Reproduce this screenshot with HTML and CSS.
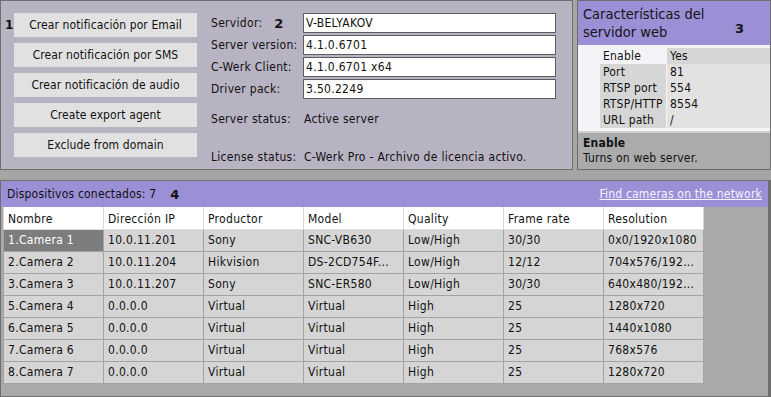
FILE: index.html
```html
<!DOCTYPE html>
<html>
<head>
<meta charset="utf-8">
<link rel="stylesheet" href="styles.css">
</head>
<body>
<div class="page">
  <div class="top">
    <div class="panel main">
      <div class="num num1">1</div>
      <div class="buttons">
        <div class="btn">Crear notificación por Email</div>
        <div class="btn">Crear notificación por SMS</div>
        <div class="btn">Crear notificación de audio</div>
        <div class="btn">Create export agent</div>
        <div class="btn">Exclude from domain</div>
      </div>
      <div class="form">
        <div class="frow"><span class="lbl">Servidor:<b class="num2">2</b></span><div class="inp">V-BELYAKOV</div></div>
        <div class="frow"><span class="lbl">Server version:</span><div class="inp">4.1.0.6701</div></div>
        <div class="frow"><span class="lbl">C-Werk Client:</span><div class="inp">4.1.0.6701 x64</div></div>
        <div class="frow"><span class="lbl">Driver pack:</span><div class="inp">3.50.2249</div></div>
        <div class="srow status1"><span class="lbl">Server status:</span><span>Active server</span></div>
        <div class="srow status2"><span class="lbl">License status:</span><span>C-Werk Pro - Archivo de licencia activo.</span></div>
      </div>
    </div>
    <div class="panel web">
      <div class="webhead"><span>Características del servidor web</span><b class="num3">3</b></div>
      <div class="props">
        <div class="prow first"><span class="pn">Enable</span><span class="pv">Yes</span></div>
        <div class="prow"><span class="pn">Port</span><span class="pv">81</span></div>
        <div class="prow"><span class="pn">RTSP port</span><span class="pv">554</span></div>
        <div class="prow"><span class="pn">RTSP/HTTP</span><span class="pv">8554</span></div>
        <div class="prow"><span class="pn">URL path</span><span class="pv">/</span></div>
      </div>
      <div class="desc"><b>Enable</b><span>Turns on web server.</span></div>
    </div>
  </div>
  <div class="panel devices">
    <div class="devhead"><span>Dispositivos conectados: 7</span><b class="num4">4</b><a class="find" href="#">Find cameras on the network</a></div>
    <table class="grid">
      <thead>
        <tr><th>Nombre</th><th>Dirección IP</th><th>Productor</th><th>Model</th><th>Quality</th><th>Frame rate</th><th>Resolution</th></tr>
      </thead>
      <tbody>
        <tr><td class="sel">1.Camera 1</td><td>10.0.11.201</td><td>Sony</td><td>SNC-VB630</td><td>Low/High</td><td>30/30</td><td>0x0/1920x1080</td></tr>
        <tr><td>2.Camera 2</td><td>10.0.11.204</td><td>Hikvision</td><td>DS-2CD754F...</td><td>Low/High</td><td>12/12</td><td>704x576/192...</td></tr>
        <tr><td>3.Camera 3</td><td>10.0.11.207</td><td>Sony</td><td>SNC-ER580</td><td>Low/High</td><td>30/30</td><td>640x480/192...</td></tr>
        <tr><td>5.Camera 4</td><td>0.0.0.0</td><td>Virtual</td><td>Virtual</td><td>High</td><td>25</td><td>1280x720</td></tr>
        <tr><td>6.Camera 5</td><td>0.0.0.0</td><td>Virtual</td><td>Virtual</td><td>High</td><td>25</td><td>1440x1080</td></tr>
        <tr><td>7.Camera 6</td><td>0.0.0.0</td><td>Virtual</td><td>Virtual</td><td>High</td><td>25</td><td>768x576</td></tr>
        <tr><td>8.Camera 7</td><td>0.0.0.0</td><td>Virtual</td><td>Virtual</td><td>High</td><td>25</td><td>1280x720</td></tr>
      </tbody>
    </table>
  </div>
</div>
</body>
</html>
```
FILE: styles.css
```css
* { box-sizing: border-box; }
html, body { margin: 0; padding: 0; }
body {
  background: #a5a5a5;
  font-family: "DejaVu Sans Condensed", "DejaVu Sans", sans-serif;
  font-size: 11px;
  color: #111;
  width: 771px;
  height: 397px;
  overflow: hidden;
}
.page { display: flex; flex-direction: column; gap: 10px; }
.top { display: flex; gap: 4px; height: 170px; }
.panel { border: 1px solid #6e6e6e; }
.main {
  width: 573px;
  background: #b8b3c3;
  display: flex;
  padding: 12px 0 0 4px;
}
.num { font-family: "DejaVu Sans", sans-serif; font-weight: bold; font-size: 12px; }
.num1 { width: 9px; margin-top: 5px; }
.buttons { display: flex; flex-direction: column; gap: 6px; width: 183px; }
.btn {
  height: 24px;
  background: #e1e1e1;
  display: flex; align-items: center; justify-content: center;
  font-size: 12px;
  letter-spacing: 0.1px;
}
.form { margin-left: 14px; display: flex; flex-direction: column; gap: 2px; width: 345px; font-size: 12px; letter-spacing: 0.3px; }
.frow { display: flex; align-items: center; height: 20px; }
.lbl { width: 92px; flex: none; display: inline-flex; align-items: center; }
.num2 { font-family: "DejaVu Sans", sans-serif; font-size: 13px; margin-left: 12px; }
.inp {
  flex: 1;
  height: 20px;
  border: 1px solid #5e5e5e;
  background: #fff;
  padding: 0 2px;
  display: flex; align-items: center;
}
.srow { display: flex; align-items: center; height: 16px; }
.status1 { margin-top: 10px; }
.status2 { margin-top: 20px; }
.srow .lbl { width: 93px; }

.web { width: 194px; background: #fff; display: flex; flex-direction: column; }
.webhead {
  background: #9b8fd6;
  height: 44px;
  padding: 4px 5px 0 5px;
  font-size: 14.5px;
  line-height: 18px;
  color: #141414;
  position: relative;
}
.webhead span { display: block; width: 150px; }
.num3 { position: absolute; right: 26px; top: 19px; font-family: "DejaVu Sans", sans-serif; font-size: 13px; }
.props { background: #f4f4f8; padding: 3px 0 0 22px; flex: 1; border-bottom: 2px solid #cfcfcf; }
.prow { display: flex; height: 16px; align-items: center; font-size: 12px; letter-spacing: 0.2px; }
.pn { width: 66px; flex: none; background: #d6d6d6; padding-left: 3px; height: 16px; line-height: 16px; white-space: nowrap; overflow: hidden; margin-right: 1px; }
.pv { flex: 1; background: #e2e2e2; padding-left: 3px; height: 16px; line-height: 16px; }
.prow.first .pn { background: #f4f4f8; }
.prow.first .pv { background: #d6d6d6; }
.desc {
  background: #ababab;
  height: 36px;
  padding: 3px 5px;
  display: flex; flex-direction: column;
  font-size: 12px; line-height: 15px;
  letter-spacing: 0.2px;
}

.devices { background: #a9a9a9; height: 217px; border-right-width: 3px; }
.devhead {
  background: #9b8fd6;
  height: 26px;
  display: flex; align-items: center;
  padding: 0 6px;
  font-size: 12px;
  letter-spacing: 0.2px;
}
.num4 { font-family: "DejaVu Sans", sans-serif; font-size: 13px; margin-left: 14px; }
.find { margin-left: auto; color: #f4f4ff; text-decoration: underline; font-size: 12px; }
.grid { border-collapse: collapse; margin-left: 2px; font-size: 12px; letter-spacing: 0.3px; }
.grid th, .grid td {
  width: 100px; height: 22px;
  padding: 0 4px;
  text-align: left; font-weight: normal;
  border: 1px solid #a3a3a3;
  white-space: nowrap;
}
.grid th { background: #fff; border-top: none; height: 22px; padding-top: 2px; border-color: #e0e0e0 #d8d8d8; }
.grid td { background: #d5d5d5; }
.grid td.sel { background: #7d7d7d; color: #fff; }
```
